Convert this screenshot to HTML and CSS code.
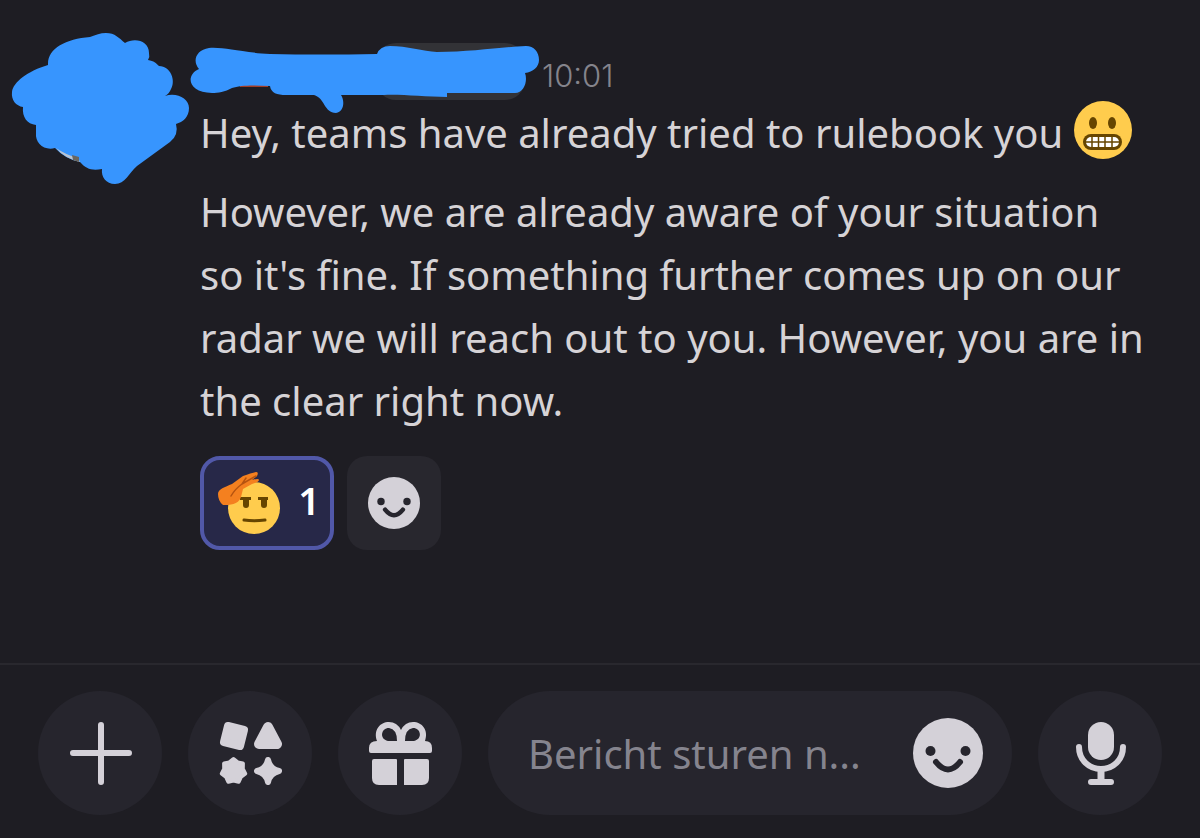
FILE: index.html
```html
<!DOCTYPE html>
<html lang="en">
<head>
  <meta charset="UTF-8" />
  <meta name="viewport" content="width=device-width, initial-scale=1.0"/>
  <title>Direct Message</title>
  <link rel="stylesheet" href="styles.css">
</head>
<body>
  <main>
    <article class="message">
      <svg class="avatar" viewBox="0 0 200 160" aria-hidden="true">
        <path fill="#3795fe" d="M48 36C48 20 66 11 90 9C96 7 100 5 106 5C115 5 119 10 125 15C135 9 149 13 149 25Q150 29 148 32C154 33 156 35 159 38C171 38 176 53 171 61Q169 66 165 68C177 64 189 71 189 80C189 89 183 94 176 96Q179 107 170 114L137 138C129 145 125 156 115 156C106 156 101 149 102 141C92 143 86 141 80 134Q65 131 55 120C44 123 35 115 36 105L36 97C27 96 22 89 23 79C16 78 11 72 12 64C13 54 28 43 48 37Z"/>
        <path fill="#b9c4d2" d="M56 120Q64 130 80 134L78 130Q66 127 56 120Z"/>
        <path fill="#6a665f" d="M72 127l7 2v5l-6-2z"/>
      </svg>
      <div class="message-body">
        <header class="message-header">
          <svg class="name" viewBox="0 0 350 58" aria-hidden="true">
            <rect x="186" y="0" width="149" height="57" rx="20" fill="#323236"/>
            <path stroke="#a33c25" stroke-width="2" d="M133 13h24M50 43h28"/>
            <path fill="#3795fe" d="M19 5C35 4 48 9 80 11Q130 12 187 11Q190 3 200 3C217 3 233 8 247 9C281 9 312 4 336 3C344 3 349 9 349 17C349 24 343 29 335 30C338 38 334 50 325 50H257V54C235 54 210 51 194 52H151C155 58 154 69 146 70C134 70 135 55 124 52H96C87 52 81 50 80 43C64 42 50 42 42 45C35 49 28 50 22 50C-2 50-5 32 9 26C2 18 6 7 19 5Z"/>
          </svg>
          <time class="time">10:01</time>
        </header>
        <p>Hey, teams have already tried to rulebook you
          <svg class="emoji" viewBox="0 0 58 58" role="img" aria-label="grimacing face">
            <circle cx="29" cy="29" r="29" fill="#ffcc4d"/>
            <ellipse cx="19" cy="22" rx="4" ry="6" fill="#664500"/>
            <ellipse cx="38" cy="22" rx="4" ry="6" fill="#664500"/>
            <rect x="9" y="33" width="39" height="16" rx="8" fill="#664500"/>
            <rect x="12" y="36" width="33" height="10" rx="5" fill="#fff"/>
            <path fill="none" stroke="#664500" stroke-width="1.5" d="M12 41h33M18 36v10M24.500 36v10M31 36v10M38 36v10"/>
          </svg>
        </p>
        <p>However, we are already aware of your situation so it's fine. If something further comes up on our radar we will reach out to you. However, you are in the clear right now.</p>
        <div class="reactions">
          <button class="reaction active" type="button" aria-label="Salute, 1 reaction">
            <svg class="salute" viewBox="0 0 64 64" aria-hidden="true">
              <circle cx="36" cy="37" r="26" fill="#ffcc4d"/>
              <path fill="#664500" d="M22 26h11v3h-2v5q0 3-3 3t-3-3v-5h-3zM40 26h10v3h-1v5q0 3-3 3t-3-3v-5h-3z"/>
              <path fill="none" stroke="#664500" stroke-width="3" stroke-linecap="round" d="M26 49q10 1.500 21 0"/>
              <path fill="#f4801f" d="M38 1q3 0 1 4l-5 4q7-2 7 0q0 2-7 4l-9 5l-2 8c-3 8-11 8-18 8q-5-4-5-11C0 18 7 16 14 13L25 5Q33 2 38 1Z"/>
              <path fill="none" stroke="#b55310" stroke-width="1.500" stroke-linecap="round" d="M38 5L24 13Q17 18 13 25M24 13l4-6"/>
            </svg>
            <span class="count">1</span>
          </button>
          <button class="reaction add" type="button" aria-label="Add reaction">
            <svg class="smile-small" viewBox="0 0 70 70" aria-hidden="true">
              <circle cx="35" cy="35" r="35" fill="#d4d1d8"/>
              <circle cx="17.500" cy="33" r="5" fill="#26252d"/>
              <circle cx="52.500" cy="33" r="5" fill="#26252d"/>
              <path fill="none" stroke="#26252d" stroke-width="6" stroke-linecap="round" d="M23 44q12 15 24 0"/>
            </svg>
          </button>
        </div>
      </div>
    </article>
  </main>

  <form class="composer">
    <button class="round" type="button" aria-label="Add attachment">
      <svg class="icon" viewBox="-1 0 64 64" aria-hidden="true">
        <path stroke="#d4d1d8" stroke-width="6" stroke-linecap="round" d="M32 4v57M4 32h56"/>
      </svg>
    </button>
    <button class="round" type="button" aria-label="Apps">
      <svg class="icon" viewBox="-1 0 64 64" fill="#d4d1d8" stroke="#d4d1d8" stroke-linejoin="round" aria-hidden="true">
        <path stroke-width="8" d="M9 5L25 9L21 25L5 21Z"/>
        <path stroke-width="10" d="M49 6L58 23H40Z"/>
        <path stroke-width="4" d="M14.500 38L18.600 41.400L23.900 42.500L23.800 47.900L26.200 52.700L21.900 55.900L19.700 60.800L14.500 59.500L9.300 60.800L7.100 55.900L2.800 52.700L5.200 47.900L5.100 42.500L10.400 41.400Z"/>
        <path stroke-width="6" d="M49 39Q51 48 60 50Q51 52 49 61Q47 52 38 50Q47 48 49 39Z"/>
      </svg>
    </button>
    <button class="round" type="button" aria-label="Send a gift">
      <svg class="icon" viewBox="-1 0 64 64" fill="#d4d1d8" aria-hidden="true">
        <path d="M8 20C4 9 11 1 20 1Q28 1 32 9Q36 1 44 1C53 1 60 9 56 20Q63 20 63 27V30Q63 32 61 32H2Q0 32 0 30V27Q0 20 8 20Z"/>
        <path fill="#26252d" d="M28 20H19C10 18 12 7 20 7Q28 8 28 20ZM36 20H45C54 18 52 7 44 7Q36 8 36 20Z"/>
        <path d="M5 38H27Q28 38 28 39V64H10Q3 64 3 57V40Q3 38 5 38ZM36 38H58Q60 38 60 40V57Q60 64 53 64H35V39Q35 38 36 38Z"/>
      </svg>
    </button>
    <div class="field">
      <input type="text" aria-label="Message" placeholder="Bericht sturen n..."/>
      <button class="emoji-button" type="button" aria-label="Emoji">
        <svg class="smile" viewBox="0 0 70 70" aria-hidden="true">
          <circle cx="35" cy="35" r="35" fill="#d4d1d8"/>
          <circle cx="17.500" cy="33" r="5" fill="#26252d"/>
          <circle cx="52.500" cy="33" r="5" fill="#26252d"/>
          <path fill="none" stroke="#26252d" stroke-width="6" stroke-linecap="round" d="M23 44q12 15 24 0"/>
        </svg>
      </button>
    </div>
    <button class="round" type="button" aria-label="Record voice message">
      <svg class="icon" viewBox="-1 0 64 64" fill="none" stroke="#d4d1d8" stroke-linecap="round" aria-hidden="true">
        <rect x="19" y="1" width="26" height="38" rx="13" fill="#d4d1d8" stroke="none"/>
        <path stroke-width="6" d="M10 26C10 39 20 48 32 48S54 39 54 26M22 61H42"/>
        <path stroke-width="7" stroke-linecap="butt" d="M32 48v13"/>
      </svg>
    </button>
  </form>
</body>
</html>
```

FILE: styles.css
```css
* {
  box-sizing: border-box;
  margin: 0;
  padding: 0;
}
body {
  display: flex;
  flex-direction: column;
  min-height: 100vh;
  background: #1e1d23;
  color: #d6d3d6;
  font-family: 'Noto Sans', sans-serif;
  font-size: 40px;
  line-height: 63px;
}
button, input {
  border: none;
  font: inherit;
}
button {
  display: flex;
  align-items: center;
  justify-content: center;
  cursor: pointer;
}
svg {
  display: block;
  flex-shrink: 0;
}
main {
  flex: 1;
}
.message {
  display: flex;
  padding-right: 52px;
}
.avatar {
  width: 200px;
  height: 160px;
  margin-top: 28px;
}
.message-body {
  flex: 1;
  padding-top: 43px;
}
.message-header {
  display: flex;
  align-items: center;
  gap: 2px;
  height: 58px;
  margin-left: -10px;
}
.name {
  width: 350px;
  height: 58px;
  overflow: visible;
}
.time {
  padding-top: 6px;
  color: #85848c;
  font-family: Inter, sans-serif;
  font-size: 31px;
  font-weight: 300;
}
.message p {
  margin-bottom: 16px;
}
.emoji {
  display: inline-block;
  width: 58px;
  height: 58px;
  vertical-align: top;
}
.reactions {
  display: flex;
  gap: 13px;
  margin-top: 24px;
}
.reaction {
  height: 94px;
  border-radius: 20px;
}
.reaction.active {
  gap: 16px;
  width: 134px;
  padding-left: 4px;
  background: #272848;
  border: 4px solid #5158a8;
  color: #fff;
}
.reaction.add {
  width: 94px;
  background: #28272e;
}
.salute {
  width: 64px;
  height: 64px;
}
.count {
  padding-bottom: 6px;
  font-size: 38px;
  font-weight: 600;
}
.smile-small {
  width: 52px;
  height: 52px;
}
.composer {
  display: flex;
  gap: 26px;
  padding: 26px 38px 23px;
  border-top: 2px solid #29282e;
}
.round {
  flex-shrink: 0;
  width: 124px;
  height: 124px;
  border-radius: 50%;
  background: #26252d;
}
.icon {
  width: 64px;
  height: 64px;
}
.field {
  display: flex;
  flex: 1;
  align-items: center;
  min-width: 0;
  padding: 0 29px 0 40px;
  border-radius: 62px;
  background: #26252d;
}
.field input {
  flex: 1;
  min-width: 0;
  background: transparent;
  color: #d6d3d6;
  outline: none;
}
.field input::placeholder {
  color: #85848e;
  opacity: 1;
}
.emoji-button {
  background: transparent;
}
.smile {
  width: 70px;
  height: 70px;
}
```
